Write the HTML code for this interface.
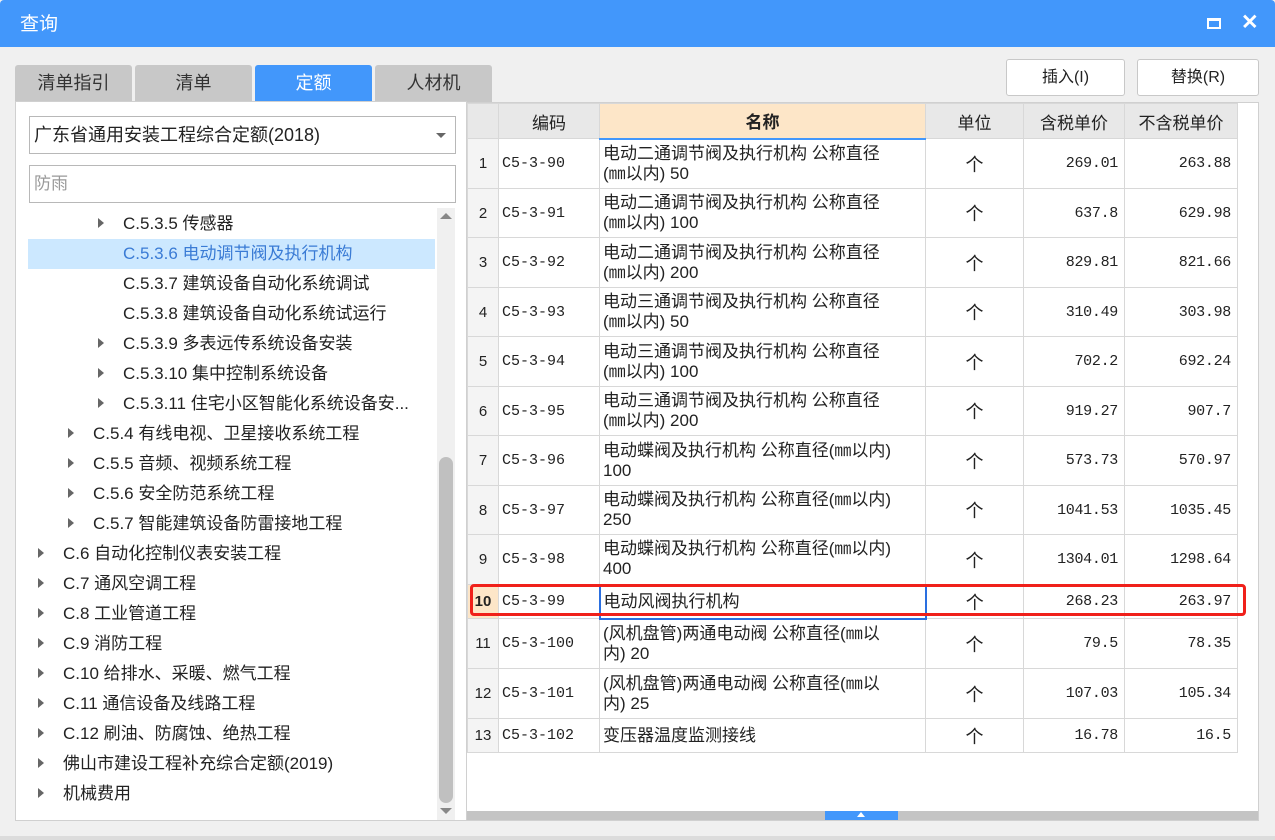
<!DOCTYPE html>
<html><head><meta charset="utf-8"><style>
*{box-sizing:border-box;margin:0;padding:0}
body{width:1275px;height:840px;background:#f0f0f0;position:relative;overflow:hidden;font-family:"Liberation Sans","Microsoft YaHei","Noto Sans CJK SC",sans-serif;color:#222}
.a{position:absolute}
#title{left:0;top:0;width:1275px;height:47px;background:#4297fb;color:#fff;font-size:19px;line-height:50px;padding-left:20px;border-radius:4px 4px 0 0}
.tab{top:65px;height:37px;background:#c8c8c8;font-size:18px;text-align:center;line-height:37px;color:#333;border-radius:3px 3px 0 0}
.btn{top:59px;height:37px;background:#fff;border:1px solid #c8c8c8;border-radius:3px;font-size:16px;text-align:center;line-height:35px}
.tr{left:28px;width:407px;height:30px;line-height:30px;font-size:17px;color:#222;white-space:nowrap}
.tri{display:inline-block;width:0;height:0;border-left:6px solid #666;border-top:5px solid transparent;border-bottom:5px solid transparent;margin-right:19px;vertical-align:1px}
table{border-collapse:collapse;position:absolute;left:467px;top:103px;table-layout:fixed;background:#fff}
td{border:1px solid #d8d8d8;font-size:15px;font-family:"Liberation Mono","Noto Sans CJK SC",monospace;padding:0 3px;vertical-align:middle}
th{border:1px solid #d8d8d8;background:#e8e8e8;font-size:17px;font-weight:normal;height:35px}
td.n{font-family:"Liberation Sans","Noto Sans CJK SC",sans-serif;font-size:17px;line-height:20px;white-space:nowrap;overflow:hidden}
td.r{text-align:right;padding-right:6px;letter-spacing:-.3px}
td.c{text-align:center;font-size:18px;font-family:"Noto Sans CJK SC",sans-serif}
td.i{text-align:center;background:#f4f4f4;font-size:15px;padding:0;font-family:"Liberation Sans",sans-serif}
</style></head><body>
<div id="title" class="a">查询</div>
<div class="a" style="left:1207px;top:18px;width:14px;height:11px;border:2px solid #fff;border-top-width:3px"></div>
<div class="a" style="left:1241px;top:10px;color:#fff;font-size:21px;font-weight:bold">✕</div>

<div class="a tab" style="left:15px;width:117px">清单指引</div>
<div class="a tab" style="left:135px;width:117px">清单</div>
<div class="a tab" style="left:255px;width:117px;background:#4297fb;color:#fff">定额</div>
<div class="a tab" style="left:375px;width:117px">人材机</div>
<div class="a btn" style="left:1006px;width:119px">插入(I)</div>
<div class="a btn" style="left:1137px;width:122px">替换(R)</div>

<div class="a" style="left:15px;top:101px;width:452px;height:720px;background:#fff;border:1px solid #d0d0d0"></div>
<div class="a" style="left:29px;top:116px;width:427px;height:38px;border:1px solid #b8b8b8;font-size:18px;line-height:36px;padding-left:4px">广东省通用安装工程综合定额(2018)<span style="position:absolute;right:9px;top:16px;border-top:5px solid #666;border-left:5px solid transparent;border-right:5px solid transparent"></span></div>
<div class="a" style="left:29px;top:165px;width:427px;height:38px;border:1px solid #b8b8b8;font-size:17px;line-height:36px;padding-left:4px;color:#999">防雨</div>

<div class="a" style="left:437px;top:208px;width:18px;height:612px;background:#f0f0f0"></div>
<div class="a" style="left:440px;top:213px;border-bottom:6px solid #888;border-left:6px solid transparent;border-right:6px solid transparent"></div>
<div class="a" style="left:439px;top:457px;width:14px;height:346px;background:#c0c0c0;border-radius:7px"></div>
<div class="a" style="left:440px;top:808px;border-top:6px solid #888;border-left:6px solid transparent;border-right:6px solid transparent"></div>

<div class="a tr" style="top:209px;padding-left:70px"><span class="tri"></span>C.5.3.5 传感器</div>
<div class="a tr" style="top:239px;padding-left:95px;background:#cce8ff;color:#3a7bd5">C.5.3.6 电动调节阀及执行机构</div>
<div class="a tr" style="top:269px;padding-left:95px">C.5.3.7 建筑设备自动化系统调试</div>
<div class="a tr" style="top:299px;padding-left:95px">C.5.3.8 建筑设备自动化系统试运行</div>
<div class="a tr" style="top:329px;padding-left:70px"><span class="tri"></span>C.5.3.9 多表远传系统设备安装</div>
<div class="a tr" style="top:359px;padding-left:70px"><span class="tri"></span>C.5.3.10 集中控制系统设备</div>
<div class="a tr" style="top:389px;padding-left:70px"><span class="tri"></span>C.5.3.11 住宅小区智能化系统设备安...</div>
<div class="a tr" style="top:419px;padding-left:40px"><span class="tri"></span>C.5.4 有线电视、卫星接收系统工程</div>
<div class="a tr" style="top:449px;padding-left:40px"><span class="tri"></span>C.5.5 音频、视频系统工程</div>
<div class="a tr" style="top:479px;padding-left:40px"><span class="tri"></span>C.5.6 安全防范系统工程</div>
<div class="a tr" style="top:509px;padding-left:40px"><span class="tri"></span>C.5.7 智能建筑设备防雷接地工程</div>
<div class="a tr" style="top:539px;padding-left:10px"><span class="tri"></span>C.6 自动化控制仪表安装工程</div>
<div class="a tr" style="top:569px;padding-left:10px"><span class="tri"></span>C.7 通风空调工程</div>
<div class="a tr" style="top:599px;padding-left:10px"><span class="tri"></span>C.8 工业管道工程</div>
<div class="a tr" style="top:629px;padding-left:10px"><span class="tri"></span>C.9 消防工程</div>
<div class="a tr" style="top:659px;padding-left:10px"><span class="tri"></span>C.10 给排水、采暖、燃气工程</div>
<div class="a tr" style="top:689px;padding-left:10px"><span class="tri"></span>C.11 通信设备及线路工程</div>
<div class="a tr" style="top:719px;padding-left:10px"><span class="tri"></span>C.12 刷油、防腐蚀、绝热工程</div>
<div class="a tr" style="top:749px;padding-left:10px"><span class="tri"></span>佛山市建设工程补充综合定额(2019)</div>
<div class="a tr" style="top:779px;padding-left:10px"><span class="tri"></span>机械费用</div>

<div class="a" style="left:466px;top:102px;width:793px;height:719px;background:#fff;border:1px solid #d0d0d0"></div>
<table>
<colgroup><col style="width:31px"><col style="width:101px"><col style="width:326px"><col style="width:98px"><col style="width:101px"><col style="width:113px"></colgroup>
<tr><th></th><th>编码</th><th style="background:#fde6c8;font-weight:bold;border-bottom:2px solid #4297fb">名称</th><th>单位</th><th>含税单价</th><th>不含税单价</th></tr>
<tr style="height:50px"><td class="i">1</td><td>C5-3-90</td><td class="n">电动二通调节阀及执行机构 公称直径<br>(㎜以内) 50</td><td class="c">个</td><td class="r">269.01</td><td class="r">263.88</td></tr>
<tr style="height:49px"><td class="i">2</td><td>C5-3-91</td><td class="n">电动二通调节阀及执行机构 公称直径<br>(㎜以内) 100</td><td class="c">个</td><td class="r">637.8</td><td class="r">629.98</td></tr>
<tr style="height:50px"><td class="i">3</td><td>C5-3-92</td><td class="n">电动二通调节阀及执行机构 公称直径<br>(㎜以内) 200</td><td class="c">个</td><td class="r">829.81</td><td class="r">821.66</td></tr>
<tr style="height:49px"><td class="i">4</td><td>C5-3-93</td><td class="n">电动三通调节阀及执行机构 公称直径<br>(㎜以内) 50</td><td class="c">个</td><td class="r">310.49</td><td class="r">303.98</td></tr>
<tr style="height:50px"><td class="i">5</td><td>C5-3-94</td><td class="n">电动三通调节阀及执行机构 公称直径<br>(㎜以内) 100</td><td class="c">个</td><td class="r">702.2</td><td class="r">692.24</td></tr>
<tr style="height:49px"><td class="i">6</td><td>C5-3-95</td><td class="n">电动三通调节阀及执行机构 公称直径<br>(㎜以内) 200</td><td class="c">个</td><td class="r">919.27</td><td class="r">907.7</td></tr>
<tr style="height:50px"><td class="i">7</td><td>C5-3-96</td><td class="n">电动蝶阀及执行机构 公称直径(㎜以内)<br>100</td><td class="c">个</td><td class="r">573.73</td><td class="r">570.97</td></tr>
<tr style="height:49px"><td class="i">8</td><td>C5-3-97</td><td class="n">电动蝶阀及执行机构 公称直径(㎜以内)<br>250</td><td class="c">个</td><td class="r">1041.53</td><td class="r">1035.45</td></tr>
<tr style="height:50px"><td class="i">9</td><td>C5-3-98</td><td class="n">电动蝶阀及执行机构 公称直径(㎜以内)<br>400</td><td class="c">个</td><td class="r">1304.01</td><td class="r">1298.64</td></tr>
<tr style="height:34px"><td class="i" style="background:#fde6c8;font-weight:bold">10</td><td>C5-3-99</td><td class="n" style="border:2px solid #2a6fe0;border-top-color:#d8d8d8">电动风阀执行机构</td><td class="c">个</td><td class="r">268.23</td><td class="r">263.97</td></tr>
<tr style="height:50px"><td class="i">11</td><td>C5-3-100</td><td class="n">(风机盘管)两通电动阀 公称直径(㎜以<br>内) 20</td><td class="c">个</td><td class="r">79.5</td><td class="r">78.35</td></tr>
<tr style="height:50px"><td class="i">12</td><td>C5-3-101</td><td class="n">(风机盘管)两通电动阀 公称直径(㎜以<br>内) 25</td><td class="c">个</td><td class="r">107.03</td><td class="r">105.34</td></tr>
<tr style="height:34px"><td class="i">13</td><td>C5-3-102</td><td class="n">变压器温度监测接线</td><td class="c">个</td><td class="r">16.78</td><td class="r">16.5</td></tr>
</table>
<div class="a" style="left:470px;top:584px;width:776px;height:32px;border:3px solid #f0201a;border-radius:4px"></div>
<div class="a" style="left:467px;top:811px;width:791px;height:9px;background:#c4c4c4"></div>
<div class="a" style="left:825px;top:811px;width:73px;height:9px;background:#4297fb"></div>
<div class="a" style="left:857px;top:812px;border-bottom:5px solid #fff;border-left:4px solid transparent;border-right:4px solid transparent"></div>
<div class="a" style="left:0;top:836px;width:1275px;height:4px;background:#dcdcdc"></div>
</body></html>
